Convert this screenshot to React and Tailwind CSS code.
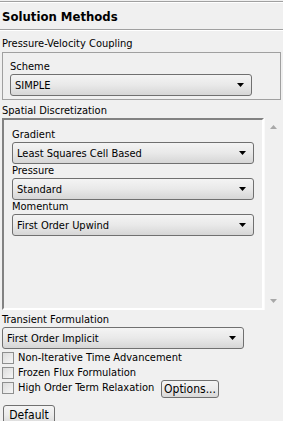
import React from "react";

const font = { fontFamily: '"DejaVu Sans Condensed", "DejaVu Sans", sans-serif' };

function Combo({ value, className = "" }) {
  return (
    <div
      className={`flex h-[22px] items-center justify-between rounded-[3px] border border-[#707070] bg-gradient-to-b from-[#f4f4f4] via-[#e9e9e9] to-[#d6d6d6] pl-[4px] pr-[7px] text-[11px] leading-none text-black ${className}`}
    >
      <span>{value}</span>
      <svg width="7" height="4" viewBox="0 0 7 4">
        <path d="M0 0H7L3.5 4Z" fill="#000" />
      </svg>
    </div>
  );
}

function Check({ label, className = "" }) {
  return (
    <div className={`flex h-[15px] items-center gap-[4px] ${className}`}>
      <div className="h-[12px] w-[12px] border border-[#8e8f8f] bg-gradient-to-br from-[#dcdcdc] to-[#f6f6f6]" />
      <span className="text-[11px] leading-none">{label}</span>
    </div>
  );
}

function Button({ children, className = "" }) {
  return (
    <div
      className={`flex items-center justify-center rounded-[3px] border border-[#707070] bg-gradient-to-b from-[#f4f4f4] via-[#ebebeb] to-[#d8d8d8] text-[12px] leading-none ${className}`}
    >
      {children}
    </div>
  );
}

export default function App() {
  return (
    <div style={font} className="h-[421px] w-[283px] overflow-hidden bg-[#f0f0f0] text-black">
      <div className="mt-[1px] h-[2px] border-t border-[#a0a0a0] border-b border-b-white" />
      <div className="flex h-[26px] items-center pl-[2px] pt-[2px] text-[13px] font-bold">Solution Methods</div>
      <div className="h-[2px] border-t border-[#a0a0a0] border-b border-b-white" />
      <div className="mt-[6px] pl-[2px] text-[11px] leading-[14px]">Pressure-Velocity Coupling</div>
      <div className="ml-[2px] mt-[1px] h-[48px] w-[279px] border border-[#a0a0a0] pl-[7px] pt-[7px]">
        <div className="text-[11px] leading-[14px]">Scheme</div>
        <Combo value="SIMPLE" className="w-[242px]" />
      </div>
      <div className="mt-[4px] pl-[2px] text-[11px] leading-[14px]">Spatial Discretization</div>
      <div className="ml-[2px] flex h-[192px] w-[280px]">
        <div className="h-[192px] w-[262px] border-2 border-l-[#828282] border-t-[#828282] border-r-white border-b-white pl-[8px] pt-[8px]">
          <div className="text-[11px] leading-[14px]">Gradient</div>
          <Combo value="Least Squares Cell Based" className="w-[242px]" />
          <div className="text-[11px] leading-[14px]">Pressure</div>
          <Combo value="Standard" className="w-[242px]" />
          <div className="text-[11px] leading-[14px]">Momentum</div>
          <Combo value="First Order Upwind" className="w-[242px]" />
        </div>
        <div className="flex h-[192px] w-[18px] flex-col items-center justify-between border-l border-[#fafafa] bg-[#f0f0f0] py-[7px]">
          <svg width="7" height="4" viewBox="0 0 7 4">
            <path d="M0 4H7L3.5 0Z" fill="#a8a8a8" />
          </svg>
          <svg width="7" height="4" viewBox="0 0 7 4">
            <path d="M0 0H7L3.5 4Z" fill="#a8a8a8" />
          </svg>
        </div>
      </div>
      <div className="mt-[3px] pl-[2px] text-[11px] leading-[14px]">Transient Formulation</div>
      <Combo value="First Order Implicit" className="ml-[2px] w-[242px]" />
      <div className="mt-[1px] pl-[2px]">
        <Check label="Non-Iterative Time Advancement" />
        <Check label="Frozen Flux Formulation" />
        <div className="flex items-start">
          <Check label="High Order Term Relaxation" className="w-[159px]" />
          <Button className="h-[18px] w-[58px]">Options...</Button>
        </div>
      </div>
      <Button className="ml-[3px] mt-[7px] h-[20px] w-[52px]">Default</Button>
    </div>
  );
}
